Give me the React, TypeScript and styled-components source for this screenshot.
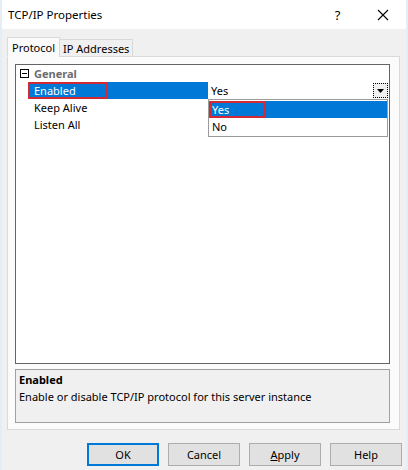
import styled, { createGlobalStyle } from 'styled-components';

const GlobalStyle = createGlobalStyle`
  html, body {
    margin: 0;
    padding: 0;
    background: #f0f0f0;
  }
  body {
    font-family: "Noto Sans", "Open Sans", sans-serif;
    font-size: 11px;
    color: #000;
  }
`;

interface Prop {
  name: string;
  selected?: boolean;
}

const props: Prop[] = [
  { name: 'Enabled', selected: true },
  { name: 'Keep Alive' },
  { name: 'Listen All' },
];

const App = () => {
  return (
    <>
      <GlobalStyle />
      <Window>
        <TitleBar>
          <Title>TCP/IP Properties</Title>
          <TitleButtons>
            <HelpGlyph>?</HelpGlyph>
            <CloseGlyph>
              <svg width="12" height="12" viewBox="0 0 12 12">
                <path d="M1 1 L11 11 M11 1 L1 11" stroke="#000" strokeWidth="1.1" />
              </svg>
            </CloseGlyph>
          </TitleButtons>
        </TitleBar>

        <Body>
          <TabStrip>
            <Tab $active>Protocol</Tab>
            <Tab>IP Addresses</Tab>
          </TabStrip>
          <TabPanel>
            <Grid>
              <CategoryRow>
                <Margin>
                  <Expander>
                    <svg width="9" height="9" viewBox="0 0 9 9">
                      <rect x="0.5" y="0.5" width="8" height="8" fill="#fff" stroke="#000" />
                      <path d="M2 4.5 H7" stroke="#000" />
                    </svg>
                  </Expander>
                </Margin>
                <CategoryName>General</CategoryName>
              </CategoryRow>
              {props.map(p => (
                <PropRow key={p.name}>
                  <Margin />
                  <NameCell $selected={p.selected}>
                    {p.name}
                    {p.selected && <RedMark style={{ width: 79 }} />}
                  </NameCell>
                  <ValueCell>
                    {p.selected && (
                      <>
                        <ValueText>Yes</ValueText>
                        <DropButton>
                          <svg width="7" height="4" viewBox="0 0 7 4">
                            <path d="M0 0 H7 L3.5 4 Z" fill="#000" />
                          </svg>
                        </DropButton>
                        <DropList>
                          <DropItem $hot>
                            Yes
                            <RedMark style={{ width: 57, left: 0 }} />
                          </DropItem>
                          <DropItem>No</DropItem>
                        </DropList>
                      </>
                    )}
                  </ValueCell>
                </PropRow>
              ))}
            </Grid>
            <Description>
              <DescTitle>Enabled</DescTitle>
              <DescText>Enable or disable TCP/IP protocol for this server instance</DescText>
            </Description>
          </TabPanel>
          <ButtonRow>
            <Button $default>OK</Button>
            <Button>Cancel</Button>
            <Button>
              <u>A</u>pply
            </Button>
            <Button>Help</Button>
          </ButtonRow>
        </Body>
      </Window>
    </>
  );
};

export default App;

const Window = styled.div`
  width: 408px;
  height: 470px;
  display: flex;
  flex-direction: column;
  background: #f0f0f0;
  overflow: hidden;
  border-left: 2px solid #e6eef3;
  border-right: 2px solid #e6eef3;
  box-sizing: border-box;
`;

const TitleBar = styled.div`
  height: 29px;
  flex-shrink: 0;
  display: flex;
  align-items: center;
  justify-content: space-between;
  background: #fff;
  padding-left: 6px;
`;

const Title = styled.div`
  font-size: 11.5px;
  color: #000;
`;

const TitleButtons = styled.div`
  display: flex;
  align-items: center;
  height: 100%;
`;

const HelpGlyph = styled.div`
  width: 45px;
  text-align: center;
  font-size: 13px;
  padding-left: 10px;
`;

const CloseGlyph = styled.div`
  width: 46px;
  height: 100%;
  display: flex;
  align-items: center;
  justify-content: center;
`;

const Body = styled.div`
  flex: 1;
  display: flex;
  flex-direction: column;
  padding: 8px 6px 0 5px;
`;

const TabStrip = styled.div`
  display: flex;
  align-items: flex-end;
  height: 20px;
  position: relative;
  z-index: 1;
`;

const Tab = styled.div<{ $active?: boolean }>`
  height: ${p => (p.$active ? 20 : 18)}px;
  box-sizing: border-box;
  padding: 0 ${p => (p.$active ? 4 : 3)}px;
  border: 1px solid #d9d9d9;
  border-bottom: ${p => (p.$active ? '1px solid #fbfbfb' : '1px solid #d9d9d9')};
  background: ${p => (p.$active ? '#fbfbfb' : '#f0f0f0')};
  margin-left: ${p => (p.$active ? 0 : -1)}px;
  display: flex;
  align-items: center;
`;

const TabPanel = styled.div`
  height: 374px;
  box-sizing: border-box;
  margin-top: -1px;
  border: 1px solid #d9d9d9;
  background: #fbfbfb;
  padding: 7px 9px 6px 7px;
  display: flex;
  flex-direction: column;
  gap: 5px;
`;

const Grid = styled.div`
  height: 300px;
  box-sizing: border-box;
  border: 1px solid #646464;
  background: #fff;
  display: flex;
  flex-direction: column;
  flex-shrink: 0;
`;

const CategoryRow = styled.div`
  height: 17px;
  display: flex;
  align-items: center;
`;

const PropRow = styled.div`
  height: 17px;
  display: flex;
  align-items: stretch;
`;

const Margin = styled.div`
  width: 13px;
  flex-shrink: 0;
  display: flex;
  align-items: center;
  justify-content: center;
`;

const Expander = styled.div`
  display: flex;
  margin-left: 4px;
`;

const CategoryName = styled.div`
  padding-left: 5px;
  font-weight: bold;
  color: #6d6d6d;
`;

const NameCell = styled.div<{ $selected?: boolean }>`
  position: relative;
  width: 179px;
  flex-shrink: 0;
  box-sizing: border-box;
  padding-left: 5px;
  display: flex;
  align-items: center;
  background: ${p => (p.$selected ? '#0078d7' : '#fff')};
  color: ${p => (p.$selected ? '#fff' : '#000')};
`;

const RedMark = styled.div`
  position: absolute;
  left: -1px;
  top: 0;
  bottom: 0;
  border: 2px solid #d12a35;
  box-sizing: border-box;
  pointer-events: none;
`;

const ValueCell = styled.div`
  position: relative;
  flex: 1;
  display: flex;
  align-items: center;
  padding-left: 3px;
`;

const ValueText = styled.div`
  flex: 1;
`;

const DropButton = styled.div`
  width: 13px;
  height: 13px;
  margin-right: 1px;
  border: 1px dotted #000;
  background: #f0f0f0;
  display: flex;
  align-items: center;
  justify-content: center;
`;

const DropList = styled.div`
  position: absolute;
  left: 0;
  right: 1px;
  top: 17px;
  height: 38px;
  box-sizing: border-box;
  border: 1px solid #9b9b9b;
  background: #fff;
  padding: 1px 0;
  display: flex;
  flex-direction: column;
  z-index: 2;
`;

const DropItem = styled.div<{ $hot?: boolean }>`
  position: relative;
  height: 17px;
  display: flex;
  align-items: center;
  padding-left: 3px;
  background: ${p => (p.$hot ? '#0078d7' : '#fff')};
  color: ${p => (p.$hot ? '#fff' : '#000')};
`;

const Description = styled.div`
  height: 55px;
  box-sizing: border-box;
  border: 1px solid #a0a0a0;
  background: #f0f0f0;
  padding: 1px 3px;
  display: flex;
  flex-direction: column;
`;

const DescTitle = styled.div`
  font-weight: bold;
  line-height: 17px;
`;

const DescText = styled.div`
  line-height: 17px;
`;

const ButtonRow = styled.div`
  display: flex;
  justify-content: flex-end;
  gap: 9px;
  padding-top: 13px;
  margin-right: -2px;
`;

const Button = styled.div<{ $default?: boolean }>`
  width: 72px;
  height: 23px;
  box-sizing: border-box;
  display: flex;
  align-items: center;
  justify-content: center;
  background: #e1e1e1;
  border: ${p => (p.$default ? '2px solid #0078d7' : '1px solid #adadad')};
`;
